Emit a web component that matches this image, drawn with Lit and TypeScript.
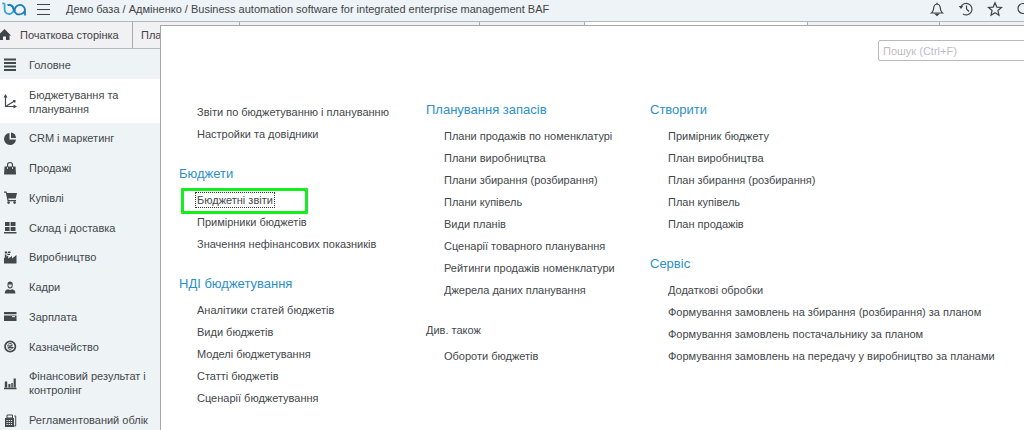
import { LitElement, html, css, svg, nothing } from "lit";
import { customElement } from "lit/decorators.js";
import { classMap } from "lit/directives/class-map.js";

interface Section {
  label: string;
  icon: unknown;
  active?: boolean;
}

interface Group {
  title?: string;
  plain?: boolean;
  items: string[];
}

const sections: Section[] = [
  { label: "Головне", icon: svg`<path d="M0 2.500h12M0 6h12M0 9.500h12M0 13h12" stroke="currentColor" stroke-width="2"/>` },
  {
    label: "Бюджетування та планування",
    active: true,
    icon: svg`<path d="M1.500 2v10.500H11M1.500 12.500 10.500 7" fill="none" stroke="currentColor" stroke-width="1.200"/><path d="M-.5 3.500 1.500 0l2 3.500zM9.500 10.500l3.500 2-3.500 2zM9 6h2.500v2.500H10z"/>`,
  },
  { label: "CRM і маркетинг", icon: svg`<path d="M5.500 2v6.500H12A6 6 0 1 1 5.500 2z"/><path d="M7 1.500A5.500 5.500 0 0 1 12 7H7z"/>` },
  { label: "Продажі", icon: svg`<path d="M.5 5.500h11l.5 8H0z"/><path d="M3.500 8V4a2.500 2.500 0 0 1 5 0v4" fill="none" stroke="currentColor" stroke-width="1.200"/><path d="M3.500 6v2M8.500 6v2" stroke="#eef3f6" stroke-width=".8"/>` },
  { label: "Купівлі", icon: svg`<path d="M0 1.500h2.500l.6 1.500H13l-1.300 5.500H4.300L4.600 10H12v1.200H3.600L1.800 2.700H0z"/><circle cx="4.600" cy="12.600" r="1.300"/><circle cx="10.600" cy="12.600" r="1.300"/>` },
  { label: "Склад і доставка", icon: svg`<path d="M1 2h4.600v4H1zM6.600 2h4.900v4H6.600zM1 7h4.600v4H1zM6.600 7h4.900v4H6.600zM0 12h12.500v1.600H0z"/>` },
  { label: "Виробництво", icon: svg`<path d="M0 13.500V8l4.200-2.500V8.500L8 6v2.500L12.500 5v8.500z"/><path d="M.8 7.500V4.500h1.700v2.200zM.8 1.500h2.400v2H.8zM4 1.500h2.500v1.500H4zM3.400 3.800H6V5H3.400z"/>` },
  { label: "Кадри", icon: svg`<path d="M3.500 4a2.600 2.600 0 0 1 5.200 0v1.500a2.600 2.900 0 0 1-5.200 0z"/><path d="M4.400 4.600h3.400v1a1.700 1.800 0 0 1-3.400 0z" fill="#dfe4e7"/><path d="M.8 13.500c0-3 1-4 3.200-4.300l2.100.8 2.100-.8c2.200.3 3.200 1.300 3.200 4.300z"/>` },
  { label: "Зарплата", icon: svg`<path d="M0 3h12.500v2.200H0zM0 6.400h12.500V12H0z"/><path d="M8 7.700h3" stroke="#eef3f6" stroke-width="1"/>` },
  { label: "Казначейство", icon: svg`<circle cx="6.200" cy="7.500" r="5.200" fill="none" stroke="currentColor" stroke-width="1.700"/><path d="M3.800 5.800c.8-1.800 4.600-1.600 4.300.1-.2 1.300-4 1.900-4 3.300.2 1.600 3.800 1.500 4.500-.3M3 6.900h5.500M3.800 8.500H9.500" fill="none" stroke="currentColor" stroke-width="1"/>` },
  { label: "Фінансовий результат і контролінг", icon: svg`<path d="M0 11.700h12.500v1.600H0zM.8 5.500h2.400v6H.8zM4.400 8h2v3.500h-2zM7.300 7h1.500v4.500H7.300zM9.600 2.500h2.200v9H9.600z"/>` },
  { label: "Регламентований облік", icon: svg`<path d="M3 2h5.500v3H3z" fill="none" stroke="currentColor"/><path d="M1 5h9v9H1z"/><path d="M2.500 7.500h6M2.500 9.500h6M2.500 11.500h6" stroke="#eef3f6" stroke-dasharray="1.200 1"/><path d="M10.200 3h1.500v10h-1.500" fill="none" stroke="currentColor"/>` },
];

const columns: Group[][] = [
  [
    { items: ["Звіти по бюджетуванню і плануванню", "Настройки та довідники"] },
    { title: "Бюджети", items: ["Бюджетні звіти", "Примірники бюджетів", "Значення нефінансових показників"] },
    {
      title: "НДІ бюджетування",
      items: ["Аналітики статей бюджетів", "Види бюджетів", "Моделі бюджетування", "Статті бюджетів", "Сценарії бюджетування"],
    },
  ],
  [
    {
      title: "Планування запасів",
      items: [
        "Плани продажів по номенклатурі",
        "Плани виробництва",
        "Плани збирання (розбирання)",
        "Плани купівель",
        "Види планів",
        "Сценарії товарного планування",
        "Рейтинги продажів номенклатури",
        "Джерела даних планування",
      ],
    },
    { title: "Див. також", plain: true, items: ["Обороти бюджетів"] },
  ],
  [
    {
      title: "Створити",
      items: ["Примірник бюджету", "План виробництва", "План збирання (розбирання)", "План купівель", "План продажів"],
    },
    {
      title: "Сервіс",
      items: [
        "Додаткові обробки",
        "Формування замовлень на збирання (розбирання) за планом",
        "Формування замовлень постачальнику за планом",
        "Формування замовлень на передачу у виробництво за планами",
      ],
    },
  ],
];

const current = "Бюджетні звіти";

@customElement("app-header")
class AppHeader extends LitElement {
  static styles = css`
    :host {
      display: flex;
      align-items: center;
      box-sizing: border-box;
      height: 22px;
      padding: 0 0 3px 2px;
      overflow: hidden;
      background: #edf3f6;
      border-bottom: 1px solid #b4b9bc;
      color: #3f4447;
    }
    .logo { flex: none; margin-right: 11px; }
    .title { flex: 1; margin: 0 0 0 16px; font-size: 11px; font-weight: 400; line-height: 18px; white-space: nowrap; }
    .tool { display: flex; flex: none; margin: 0 0 0 13px; padding: 0; border: 0; background: none; color: inherit; }
    .menu { margin: 0; }
    .last { margin-right: -8px; }
    svg { display: block; fill: none; stroke: currentColor; }
  `;
  render() {
    return html`
      <svg class="logo" width="24" height="14" viewBox="0 0 24 14" stroke-width="1.800" role="img" aria-label="BAF">
        <path d="M.3 1.300h1.200q1.100 0 1.100 1.200V7.300a4.600 4.600 0 1 0 3-4.200" stroke="#3aa5dc" />
        <path d="M5.600 3.100c2.600-1 5 .6 6 4.200 1 4.200 4 5.800 7 4.800" stroke="#1f78b8" />
        <path d="M12.800 9a5 5 0 1 1 10.200-1.700V13.500M18.600 12.100c2.500-.5 4.400-2.300 4.400-4.800" stroke="#1d7fc0" />
      </svg>
      <button class="tool menu" aria-label="Меню">
        <svg width="13" height="14" viewBox="0 0 13 14" stroke-width="1.200"><path d="M0 2.500h13M0 7.500h13M0 12.500h13" /></svg>
      </button>
      <h1 class="title">Демо база / Адміненко / Business automation software for integrated enterprise management BAF</h1>
      <button class="tool" aria-label="Сповіщення">
        <svg width="16" height="16" viewBox="0 0 16 16" stroke-width="1.200">
          <path d="M2.500 12c2-1.500 2-3 2.200-5C4.900 4.500 6 3.300 8 3c2 .3 3.100 1.500 3.300 4 .2 2 .2 3.500 2.200 5z" />
          <path d="M8 1.800v1.500" /><path d="M6.500 13h3L8 14.500z" fill="currentColor" />
        </svg>
      </button>
      <button class="tool" aria-label="Історія">
        <svg width="16" height="16" viewBox="0 0 16 16" stroke-width="1.200">
          <path d="M2.800 6A5.800 5.800 0 1 1 5 13M8.500 4.500V8l2.500 2.500" /><path d="M.8 5h4.400L3 8z" fill="currentColor" stroke="none" />
        </svg>
      </button>
      <button class="tool" aria-label="Обране">
        <svg width="16" height="16" viewBox="0 0 16 16" stroke-width="1.200">
          <path d="M8 1.800l1.800 4.300 4.700.4-3.600 3 1.100 4.700L8 11.700l-4 2.500 1.100-4.700-3.600-3 4.700-.4z" />
        </svg>
      </button>
      <button class="tool last" aria-label="Пошук">
        <svg width="16" height="16" viewBox="0 0 16 16" stroke-width="1.200"><circle cx="7" cy="7.500" r="5" /><path d="M11 11l4 4" /></svg>
      </button>
    `;
  }
}

@customElement("tab-strip")
class TabStrip extends LitElement {
  static styles = css`
    :host { display: block; }
    .tabs {
      display: flex;
      box-sizing: border-box;
      height: 27px;
      background: #f1f0f2;
      border-bottom: 1px solid #b4b9bc;
    }
    .tab {
      display: flex;
      align-items: center;
      box-sizing: border-box;
      flex: none;
      width: 132px;
      padding: 0 8px;
      border: 0;
      border-right: 1px solid #a9adb0;
      background: none;
      color: #3f4447;
      font: 11px/16px "Liberation Sans", Arial, sans-serif;
    }
    .home { width: 133px; padding: 0; gap: 9px; }
    .short { width: 107px; }
    .long { width: 240px; }
    .small { width: 105px; }
    .active { width: 223px; background: #fff; }
  `;
  render() {
    return html`
      <nav class="tabs">
        <button class="tab home">
          <svg width="11" height="12" viewBox="0 0 11 12" fill="currentColor"><path d="M4.500 0 11 6.500H9.500V11H6V7.500H3V11H0V4.500z" /></svg>
          Початкова сторінка
        </button>
        <button class="tab short">Пла</button>
        <span class="tab long"></span>
        <span class="tab small"></span>
        <span class="tab active"></span>
        <span class="tab"></span>
      </nav>
    `;
  }
}

@customElement("section-list")
class SectionList extends LitElement {
  static styles = css`
    :host { display: block; background: #eef3f6; }
    .list { display: flex; flex-direction: column; height: 100%; margin: 0; padding: 0; list-style: none; }
    .row { display: flex; flex: 1 0 auto; max-height: 30px; }
    .row.active { max-height: 44px; background: #fff; }
    .row.wide { max-height: 44px; }
    .link {
      display: flex;
      align-items: center;
      flex: 1;
      gap: 12px;
      padding: 8px 8px 6px 4px;
      color: #43484b;
      font-size: 11px;
      line-height: 14px;
      text-decoration: none;
    }
    .row:last-child .link { padding-bottom: 2px; }
    .icon { flex: none; overflow: visible; margin: -1px 0; }
  `;
  render() {
    return html`
      <ul class="list">
        ${sections.map(
          (s) => html`
            <li class=${classMap({ row: true, active: !!s.active, wide: s.label.length > 24 })}>
              <a class="link" href="#">
                <svg class="icon" width="13" height="15" viewBox="0 0 13 15" fill="currentColor" aria-hidden="true">${s.icon}</svg>
                <span>${s.label}</span>
              </a>
            </li>
          `
        )}
      </ul>
    `;
  }
}

@customElement("function-menu")
class FunctionMenu extends LitElement {
  static styles = css`
    :host {
      display: block;
      box-sizing: border-box;
      overflow: hidden;
      background: #fff;
      border: solid #a4a8ab;
      border-width: 1px 0 0 1px;
      color: #43484b;
    }
    .bar { display: flex; justify-content: flex-end; padding-top: 14px; margin-right: -40px; }
    .search {
      box-sizing: border-box;
      width: 186px;
      height: 21px;
      padding: 0 4px;
      border: 1px solid #b9b9be;
      border-radius: 2px;
      background: #fff;
      font: 11px/16px "Liberation Sans", Arial, sans-serif;
    }
    .search::placeholder { color: #bdbcc3; opacity: 1; }
    .columns { display: grid; grid-template-columns: 247px 224px 1fr; padding: 38px 0 0 18px; }
    .column { display: flex; flex-direction: column; gap: 18px; }
    .column:first-child { padding-top: 2px; }
    .heading { margin: 0 0 4px; color: #2c8fc9; font-size: 13px; font-weight: 400; line-height: 22px; }
    .plain { color: inherit; font-size: 11px; }
    .items { margin: 0; padding: 0 0 0 18px; list-style: none; }
    .item { position: relative; font-size: 11px; line-height: 22px; white-space: nowrap; }
    .link { color: inherit; text-decoration: none; }
    .current .link { outline: 1px dotted #333; outline-offset: 1px; }
    .current::after {
      content: "";
      position: absolute;
      top: -1px;
      left: -16px;
      box-sizing: border-box;
      width: 127px;
      height: 26px;
      border: 3px solid #14ee1c;
      border-radius: 1px;
      pointer-events: none;
    }
  `;
  render() {
    return html`
      <div class="bar"><input class="search" type="search" placeholder="Пошук (Ctrl+F)" aria-label="Пошук (Ctrl+F)" /></div>
      <div class="columns">
        ${columns.map(
          (groups) => html`
            <div class="column">
              ${groups.map(
                (g) => html`
                  <section>
                    ${g.title ? html`<h2 class=${classMap({ heading: true, plain: !!g.plain })}>${g.title}</h2>` : nothing}
                    <ul class="items">
                      ${g.items.map(
                        (i) => html`<li class=${classMap({ item: true, current: i === current })}><a class="link" href="#">${i}</a></li>`
                      )}
                    </ul>
                  </section>
                `
              )}
            </div>
          `
        )}
      </div>
    `;
  }
}

@customElement("app-root")
class AppRoot extends LitElement {
  static styles = css`
    :host {
      display: flex;
      flex-direction: column;
      position: relative;
      height: 100vh;
      overflow: hidden;
      background: #fff;
      font-family: "Liberation Sans", Arial, sans-serif;
    }
    .header, .tabs { flex: none; }
    .sections { flex: 1; min-height: 0; width: 160px; }
    .menu { position: absolute; inset: 25px 0 0 160px; }
  `;
  render() {
    return html`
      <app-header class="header"></app-header>
      <tab-strip class="tabs"></tab-strip>
      <section-list class="sections"></section-list>
      <function-menu class="menu"></function-menu>
    `;
  }
}
